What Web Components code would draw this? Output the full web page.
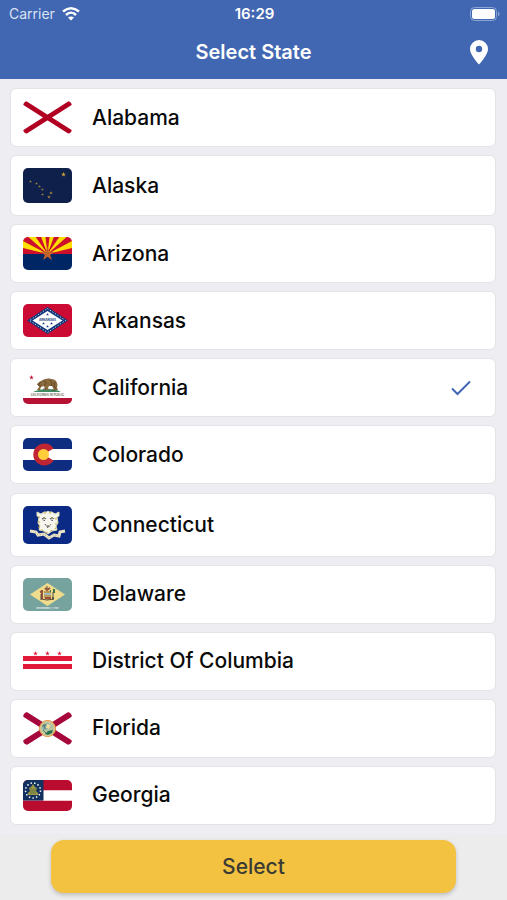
<!DOCTYPE html>
<html lang="en">
<head>
<meta charset="utf-8">
<meta name="viewport" content="width=device-width, initial-scale=1">
<title>Select State</title>
<style>
  body {
    margin: 0;
    font-family: Inter, "Liberation Sans", sans-serif;
    background: #eeeef2;
  }

  .defs {
    display: none;
  }
</style>
</head>
<body>
<svg class="defs">
  <symbol id="star" viewBox="-10 -10 20 20">
    <path d="M0-10 2.400-3.100H9.500L3.600 1.200 5.900 8.100 0 3.800-5.900 8.100-3.600 1.200-9.500-3.100H-2.400z"/>
  </symbol>
</svg>

<state-picker>
  <status-bar slot="header" carrier="Carrier" time="16:29"></status-bar>
  <nav-bar slot="header">Select State</nav-bar>

  <state-option value="AL">
    <svg slot="flag" width="49" height="33" viewBox="0 0 49 33">
      <path d="M2.500 2.500 46.500 30.500M46.500 2.500 2.500 30.500" stroke="#b10021" stroke-width="5" stroke-linecap="round"/>
    </svg>
    Alabama
  </state-option>

  <state-option value="AK">
    <svg slot="flag" width="49" height="35" viewBox="0 0 49 35">
      <path fill="#0f204b" d="M0 0h49v35H0z"/>
      <g fill="#d5a638">
        <use href="#star" x="38" y="4" width="5" height="5"/>
        <g opacity=".75">
          <use href="#star" x="6" y="12" width="3" height="3"/>
          <use href="#star" x="12" y="14" width="3" height="3"/>
          <use href="#star" x="15" y="17" width="3" height="3"/>
          <use href="#star" x="18" y="20" width="3" height="3"/>
          <use href="#star" x="18" y="25" width="3" height="3"/>
          <use href="#star" x="24" y="27" width="4" height="4"/>
          <use href="#star" x="26" y="23" width="4" height="4"/>
        </g>
      </g>
    </svg>
    Alaska
  </state-option>

  <state-option value="AZ">
    <svg slot="flag" width="49" height="33" viewBox="0 0 49 33">
      <path fill="#ce0e2d" d="M0 0h49v17H0z"/>
      <path fill="#fedd00" d="M24.500 17l58-14-5-14zM24.500 17l45-40-11-9zM24.500 17l21-56-14-4zM24.500 17l-58-14 5-14zM24.500 17l-45-40 11-9zM24.500 17l-21-56 14-4z"/>
      <path fill="#002664" d="M0 17h49v16H0z"/>
      <use href="#star" x="17" y="9" width="15" height="16" fill="#c4622b"/>
    </svg>
    Arizona
  </state-option>

  <state-option value="AR">
    <svg slot="flag" width="49" height="33" viewBox="0 0 49 33">
      <path fill="#cb0b34" d="M0 0h49v33H0z"/>
      <path fill="#10377b" d="M24.500 3 45 16.500 24.500 30 4 16.500z"/>
      <path fill="none" stroke="#fff" stroke-width="1" stroke-dasharray="1 2" d="M24.500 4.500 42.500 16.500 24.500 28.500 6.500 16.500z"/>
      <path fill="#fff" d="M24.500 7 39.500 16.500 24.500 26 9.500 16.500z"/>
      <g fill="#10377b">
        <use href="#star" x="23" y="9" width="3" height="3"/>
        <use href="#star" x="19" y="18" width="3" height="3"/>
        <use href="#star" x="27" y="18" width="3" height="3"/>
        <use href="#star" x="23" y="21" width="3" height="3"/>
      </g>
      <text x="24.500" y="17" text-anchor="middle" font-size="3" font-weight="700" fill="#10377b">ARKANSAS</text>
    </svg>
    Arkansas
  </state-option>

  <state-option value="CA" checked>
    <svg slot="flag" width="49" height="33" viewBox="0 0 49 33">
      <use href="#star" x="6" y="4" width="5" height="5" fill="#c8193c"/>
      <path fill="#3d8b5f" d="M10 21c4-2 9-3 15-3 5 0 10 1 13 3z"/>
      <path fill="#8a6a3c" d="M14 14c0-2 2-3 4-4 3-2 7-3 10-2 3 0 5 1 6 4 1 2 0 4 0 5l1 2h-4l-2-4h-3l-1 2 1 2h-4l-1-4-3 1-1 3h-3l2-3c0-1-1-2-1-2z"/>
      <path fill="none" stroke="#4b3923" stroke-width=".7" d="M18 11l-3 3 3 1M21 9l2 3-2 3M27 9l2 3-1 3M32 11l-1 4 2 3M20 18h3M29 19h3"/>
      <text x="24.500" y="25" text-anchor="middle" font-size="3" font-weight="600" fill="#6b5e52">CALIFORNIA REPUBLIC</text>
      <path fill="#b71234" d="M0 27h49v6H0z"/>
    </svg>
    California
  </state-option>

  <state-option value="CO">
    <svg slot="flag" width="49" height="33" viewBox="0 0 49 33">
      <path fill="#0f2d80" d="M0 0h49v11H0zM0 22h49v11H0z"/>
      <path fill="#fff" d="M0 11h49v11H0z"/>
      <path fill="#bf2532" d="M20.500 16.500 30.500 10.500A11 11 0 1 0 30.500 22.500z"/>
      <circle cx="20.500" cy="16.500" r="5.500" fill="#ffcd3a"/>
    </svg>
    Colorado
  </state-option>

  <state-option value="CT">
    <svg slot="flag" width="49" height="38" viewBox="0 0 49 38">
      <path fill="#0b2a85" d="M0 0h49v38H0z"/>
      <path fill="#f7f6ec" stroke="#dcdcb8" stroke-width="1" d="M14 6l4 2 3-2h3l1-1 1 1h3l3 2 4-2v4l-2 1 1 6-2 3 1 4-5 1-4 3-4-3-5-1 1-4-2-3 1-6-2-1z"/>
      <path fill="none" stroke="#63804b" stroke-width="1.500" stroke-dasharray="2 2" d="M21 11v4M29 11v4M25 19v4"/>
      <path fill="none" stroke="#674b6b" stroke-width="1" stroke-dasharray="2 1" d="M19 12l2 3 2-3M27 12l2 3 2-3M22 18l3 4 3-4"/>
      <path fill="none" stroke="#c1a93f" stroke-width="1" stroke-dasharray="2 3" d="M16 10v12l8 5 9-5V10M21 7h8"/>
      <path fill="none" stroke="#ece4c4" stroke-width="3" d="M7 25l6 1 2 3 6-1 5 4 5-3 5 1 1-4 5-1"/>
      <path fill="none" stroke="#8b8566" stroke-width=".7" stroke-dasharray="1 2" d="M12 26l3 3 6-1 5 4 5-3 5 1"/>
    </svg>
    Connecticut
  </state-option>

  <state-option value="DE">
    <svg slot="flag" width="49" height="33" viewBox="0 0 49 33">
      <path fill="#76a39d" d="M0 0h49v33H0z"/>
      <path fill="#efdc8c" d="M24.500 5 42 16.500 24.500 28 7 16.500z"/>
      <path fill="#bd9756" d="M21 13h7v7l-3 2-4-2z"/>
      <path stroke="#9dbac0" stroke-width="2" d="M21 16h7"/>
      <path fill="none" stroke="#98523a" stroke-width="2" d="M19 12v9M17 14l3-1M22 10l2 2 3-2M22 20h6"/>
      <path fill="none" stroke="#39734c" stroke-width="2" d="M31 11v4M30 19v2M27 13h1"/>
      <path fill="none" stroke="#604b3e" stroke-width="1" d="M18 16v6M30 14v8M18 21l6 1 7-1M24 8v3"/>
      <text x="24.500" y="31" text-anchor="middle" font-size="2.500" fill="#fff">DECEMBER 7, 1787</text>
    </svg>
    Delaware
  </state-option>

  <state-option value="DC">
    <svg slot="flag" width="49" height="33" viewBox="0 0 49 33">
      <g fill="#e01a38">
        <use href="#star" x="10" y="6" width="5" height="5"/>
        <use href="#star" x="22" y="6" width="5" height="5"/>
        <use href="#star" x="34" y="6" width="5" height="5"/>
        <path d="M0 11h49v5H0zM0 19h49v5H0z"/>
      </g>
    </svg>
    District Of Columbia
  </state-option>

  <state-option value="FL">
    <svg slot="flag" width="49" height="33" viewBox="0 0 49 33">
      <path d="M3 3 46 30M46 3 3 30" stroke="#a6083b" stroke-width="6" stroke-linecap="round"/>
      <circle cx="24.500" cy="16.500" r="8" fill="#b9c5a0" stroke="#e4892f" stroke-width="1"/>
      <circle cx="24.500" cy="16.500" r="7" fill="none" stroke="#e5c68b" stroke-width="1"/>
      <path fill="#81aeb2" d="M19 15c1-4 7-5 10-1l-3 3-6 1z"/>
      <path fill="#246f4d" d="M25 19l5-1-1 3-4 2-3-1z"/>
      <path fill="none" stroke="#5b7860" stroke-width="1" d="M21 12l1 5M19 14l4-1M20 18l3 3"/>
      <path fill="#f2dc97" d="M24 12l4 1-2 4-3-1z"/>
    </svg>
    Florida
  </state-option>

  <state-option value="GA">
    <svg slot="flag" width="49" height="31" viewBox="0 0 49 31">
      <path fill="#ba0c2f" d="M0 0h49v10.500H0zM0 20.500h49V31H0z"/>
      <path fill="#fff" d="M20 10.500h29v10H20z"/>
      <path fill="#12315f" d="M0 0h20.500v20.500H0z"/>
      <circle cx="10" cy="10.500" r="7.500" fill="none" stroke="#fff" stroke-width="1.500" stroke-dasharray="1.400 2.225"/>
      <path fill="#9b9841" d="M10 4l2 3 2 1-1 3 2 2v2H5v-2l2-2-1-3 2-1z"/>
      <path fill="none" stroke="#4f6650" stroke-width=".7" d="M8 8v6M12 8v6M10 9v5"/>
    </svg>
    Georgia
  </state-option>

  <button-bar slot="footer">Select</button-bar>
</state-picker>

<script>
/**
 * Creates a template from markup.
 *
 * @param {string} html - The markup.
 * @returns {HTMLTemplateElement} The template.
 */
function createTemplate (html) {
  const template = document.createElement('template')
  template.innerHTML = html
  return template
}

const statusBarTemplate = createTemplate(`
  <style>
    :host {
      display: grid;
      grid-template-columns: 1fr auto 1fr;
      align-items: center;
      height: 27px;
      padding: 0 7px 0 9px;
      font-size: 14px;
    }

    .carrier {
      display: flex;
      align-items: center;
      gap: 7px;
      color: #d9e2f4;
    }

    .time {
      font-size: 15px;
      font-weight: 600;
    }

    .battery {
      justify-self: end;
    }

    svg {
      display: block;
    }
  </style>
  <div class="carrier">
    <span id="carrier"></span>
    <svg width="18" height="14" viewBox="0 0 18 14" fill="none" stroke="#fff" stroke-width="2.500">
      <path d="M1 4.500c5-4 11-4 16 0M4 8c3-3 7-3 10 0"/>
      <path fill="#fff" stroke="none" d="M6 10.500c2-1.500 4-1.500 6 0L9 13.500z"/>
    </svg>
  </div>
  <span class="time" id="time"></span>
  <svg class="battery" width="30" height="14" viewBox="0 0 30 14">
    <rect x=".5" y=".5" width="26" height="13" rx="4" fill="none" stroke="#8ba5d5"/>
    <rect x="2" y="2" width="23" height="10" rx="2.500" fill="#fff"/>
    <path fill="#8ba5d5" d="M28 4.500c2 1 2 4 0 5z"/>
  </svg>
`)

customElements.define('status-bar',
  /**
   * Represents the status bar at the top of the screen.
   */
  class extends HTMLElement {
    /**
     * Creates an instance of the current type.
     */
    constructor () {
      super()

      this.attachShadow({ mode: 'open' })
        .appendChild(statusBarTemplate.content.cloneNode(true))
    }

    /**
     * Called when the element is added to the page.
     */
    connectedCallback () {
      this.shadowRoot.querySelector('#carrier').textContent = this.getAttribute('carrier')
      this.shadowRoot.querySelector('#time').textContent = this.getAttribute('time')
    }
  }
)

const navBarTemplate = createTemplate(`
  <style>
    :host {
      display: grid;
      grid-template-columns: 1fr auto 1fr;
      align-items: center;
      height: 50px;
      padding: 0 15px 2px;
    }

    h1 {
      grid-column: 2;
      margin: 0;
      font-size: 20px;
      font-weight: 600;
    }

    button {
      justify-self: end;
      padding: 0;
      border: 0;
      background: none;
      color: inherit;
      cursor: pointer;
    }

    svg {
      display: block;
    }
  </style>
  <h1><slot></slot></h1>
  <button type="button" aria-label="Use my location">
    <svg width="26" height="26" viewBox="0 0 26 26" fill="currentColor">
      <path fill-rule="evenodd" d="M13 1a9 9 0 0 0-9 9c0 6 9 15.500 9 15.500S22 16 22 10a9 9 0 0 0-9-9zm0 5.800a3.200 3.200 0 1 1 0 6.400 3.200 3.200 0 0 1 0-6.400z"/>
    </svg>
  </button>
`)

customElements.define('nav-bar',
  /**
   * Represents the title row with its location button.
   */
  class extends HTMLElement {
    /**
     * Creates an instance of the current type.
     */
    constructor () {
      super()

      this.attachShadow({ mode: 'open' })
        .appendChild(navBarTemplate.content.cloneNode(true))
    }
  }
)

const stateOptionTemplate = createTemplate(`
  <style>
    :host {
      display: block;
    }

    label {
      display: flex;
      align-items: center;
      gap: 20px;
      box-sizing: border-box;
      min-height: 59px;
      padding: 12px;
      border: 1px solid #e2e2e7;
      border-radius: 6px;
      background: #fff;
      color: #0a0a0a;
      font-size: 21px;
      font-weight: 500;
      line-height: 24px;
      cursor: pointer;
    }

    .name {
      flex: 1;
    }

    ::slotted(svg) {
      display: block;
      flex: none;
      overflow: hidden;
      border-radius: 5px;
    }

    input {
      appearance: none;
      width: 0;
      height: 0;
      margin: 0;
    }

    .check {
      display: none;
      margin-right: 12px;
    }

    input:checked + .check {
      display: block;
    }
  </style>
  <label>
    <slot name="flag"></slot>
    <span class="name"><slot></slot></span>
    <input type="radio" name="state">
    <svg class="check" width="20" height="16" viewBox="0 0 20 16" fill="none" stroke="#4267b2" stroke-width="2">
      <path d="M1 8.500 6.500 14 19 1.500"/>
    </svg>
  </label>
`)

customElements.define('state-option',
  /**
   * Represents one state in the list.
   */
  class extends HTMLElement {
    #input

    /**
     * Creates an instance of the current type.
     */
    constructor () {
      super()

      this.attachShadow({ mode: 'open' })
        .appendChild(stateOptionTemplate.content.cloneNode(true))

      this.#input = this.shadowRoot.querySelector('input')

      this.#input.addEventListener('change', () => {
        this.dispatchEvent(new CustomEvent('state-picked', { bubbles: true }))
      })
    }

    /**
     * Called when the element is added to the page.
     */
    connectedCallback () {
      this.#input.value = this.getAttribute('value')
      this.#input.checked = this.hasAttribute('checked')
    }

    /**
     * Sets whether the state is the picked one.
     *
     * @param {boolean} value - True if picked.
     */
    set checked (value) {
      this.#input.checked = value
    }
  }
)

const buttonBarTemplate = createTemplate(`
  <style>
    :host {
      display: block;
      padding: 6px 10% 7px;
      background: #ececec;
    }

    button {
      display: block;
      width: 100%;
      height: 53px;
      border: 0;
      border-radius: 13px;
      background: #f4c241;
      box-shadow: 0 2px 4px rgba(0, 0, 0, .2);
      color: #3b3b35;
      font: inherit;
      font-size: 21px;
      font-weight: 500;
      cursor: pointer;
    }
  </style>
  <button type="button"><slot></slot></button>
`)

customElements.define('button-bar',
  /**
   * Represents the bar with the main button.
   */
  class extends HTMLElement {
    /**
     * Creates an instance of the current type.
     */
    constructor () {
      super()

      this.attachShadow({ mode: 'open' })
        .appendChild(buttonBarTemplate.content.cloneNode(true))
    }
  }
)

const statePickerTemplate = createTemplate(`
  <style>
    :host {
      display: flex;
      flex-direction: column;
      min-height: 100vh;
    }

    header {
      background: #4267b2;
      color: #fff;
    }

    main {
      flex: 1;
      display: flex;
      flex-direction: column;
      justify-content: space-between;
      gap: 8px;
      padding: 9px 11px 9px 10px;
    }

    footer {
      position: sticky;
      bottom: 0;
    }
  </style>
  <header><slot name="header"></slot></header>
  <main role="radiogroup" aria-label="State"><slot></slot></main>
  <footer><slot name="footer"></slot></footer>
`)

customElements.define('state-picker',
  /**
   * Represents the whole screen for picking a state.
   */
  class extends HTMLElement {
    /**
     * Creates an instance of the current type.
     */
    constructor () {
      super()

      this.attachShadow({ mode: 'open' })
        .appendChild(statePickerTemplate.content.cloneNode(true))

      this.addEventListener('state-picked', (e) => {
        this.#uncheckOthers(e.target)
      })
    }

    /**
     * Unchecks every state but the picked one.
     *
     * @param {HTMLElement} picked - The picked state.
     */
    #uncheckOthers (picked) {
      for (const option of this.querySelectorAll('state-option')) {
        option.checked = option === picked
      }
    }
  }
)
</script>
</body>
</html>
